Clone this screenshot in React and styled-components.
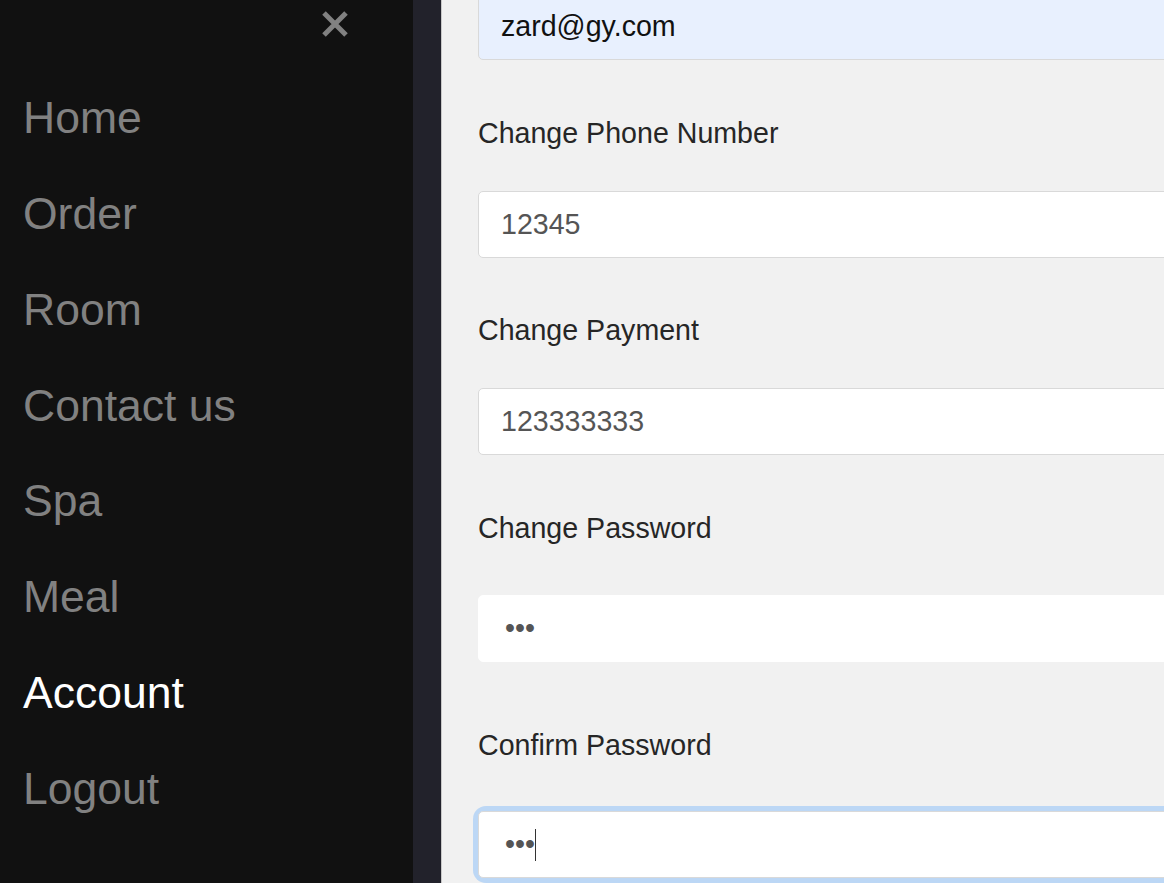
import React from 'react';
import styled, { createGlobalStyle } from 'styled-components';

const GlobalStyle = createGlobalStyle`
  html, body {
    margin: 0;
    padding: 0;
    background: #ffffff;
    font-family: "Liberation Sans", Arial, sans-serif;
  }
  #root {
    height: 883px;
  }
`;

const links = ['Home', 'Order', 'Room', 'Contact us', 'Spa', 'Meal', 'Account', 'Logout'];

const fields = [
  { label: 'Change Phone Number', value: '12345', type: 'text', labelGap: 57, inputGap: 42 },
  { label: 'Change Payment', value: '123333333', type: 'text', labelGap: 56, inputGap: 42 },
  { label: 'Change Password', value: '123', type: 'password', labelGap: 57, inputGap: 51, plain: true },
  { label: 'Confirm Password', value: '123', type: 'password', labelGap: 67, inputGap: 50, focused: true },
];

const CloseIcon = () => (
  <svg width="28" height="28" viewBox="0 0 28 28">
    <path d="M3 3 L25 25 M25 3 L3 25" stroke="#818181" strokeWidth="5" strokeLinecap="butt" />
  </svg>
);

const App = () => {
  return (
    <Page>
      <GlobalStyle />
      <SideNav>
        <CloseRow>
          <CloseButton aria-label="close">
            <CloseIcon />
          </CloseButton>
        </CloseRow>
        {links.map((name) => (
          <NavLink key={name} href="#" $active={name === 'Account'}>
            {name}
          </NavLink>
        ))}
      </SideNav>
      <Gutter />
      <Main>
        <Form>
          <Input type="email" defaultValue="zard@gy.com" $autofill readOnly />
          {fields.map((f) => (
            <Field key={f.label}>
              <Label $gap={f.labelGap}>{f.label}</Label>
              <InputWrap $gap={f.inputGap} $focused={f.focused}>
                <Input
                  type={f.type}
                  defaultValue={f.value}
                  $plain={f.plain}
                  $secret={f.type === 'password'}
                  readOnly
                />
                {f.focused && <Caret />}
              </InputWrap>
            </Field>
          ))}
        </Form>
      </Main>
    </Page>
  );
};

export default App;

const Page = styled.div`
  display: flex;
  width: 1175px;
  height: 883px;
  overflow: hidden;
  background: #ffffff;
`;

const SideNav = styled.nav`
  width: 413px;
  flex-shrink: 0;
  background: #111111;
  display: flex;
  flex-direction: column;
`;

const CloseRow = styled.div`
  height: 70px;
  display: flex;
  justify-content: flex-end;
  align-items: flex-start;
  padding: 10px 64px 0 0;
  box-sizing: border-box;
`;

const CloseButton = styled.span`
  display: block;
  width: 28px;
  height: 28px;
  cursor: pointer;
`;

const NavLink = styled.a`
  display: block;
  padding: 22.3px 23px;
  font-size: 44.5px;
  line-height: 1.15;
  color: ${(props) => (props.$active ? '#ffffff' : '#818181')};
  text-decoration: none;
`;

const Gutter = styled.div`
  width: 28px;
  flex-shrink: 0;
  background: #22222b;
  border-right: 1px solid #c8c8c8;
`;

const Main = styled.main`
  width: 722px;
  flex-shrink: 0;
  background: #f1f1f1;
  overflow: hidden;
  padding-left: 36px;
  box-sizing: border-box;
`;

const Form = styled.form`
  width: 760px;
  margin-top: -7px;
`;

const Field = styled.div`
  display: flex;
  flex-direction: column;
`;

const Label = styled.label`
  display: block;
  margin-top: ${(props) => props.$gap}px;
  font-size: 28.6px;
  line-height: 32px;
  color: #262626;
`;

const InputWrap = styled.div`
  position: relative;
  margin-top: ${(props) => props.$gap}px;
  border-radius: 8px;
  box-shadow: ${(props) => (props.$focused ? '0 0 0 5px #bcd7f5' : 'none')};
`;

const Input = styled.input`
  display: block;
  width: 100%;
  height: 67px;
  box-sizing: border-box;
  padding: 0 22px 0 ${(props) => (props.$secret ? 26 : 22)}px;
  font-family: "Liberation Sans", Arial, sans-serif;
  font-size: 28.6px;
  color: ${(props) => (props.$autofill ? '#111111' : '#555555')};
  background: ${(props) => (props.$autofill ? '#e8f0fe' : '#ffffff')};
  border: 1px solid ${(props) => (props.$plain ? '#ffffff' : '#d9d9d9')};
  border-radius: 5px;
  outline: none;
`;

const Caret = styled.span`
  position: absolute;
  left: 57px;
  top: 18px;
  width: 1px;
  height: 32px;
  background: #333333;
`;
